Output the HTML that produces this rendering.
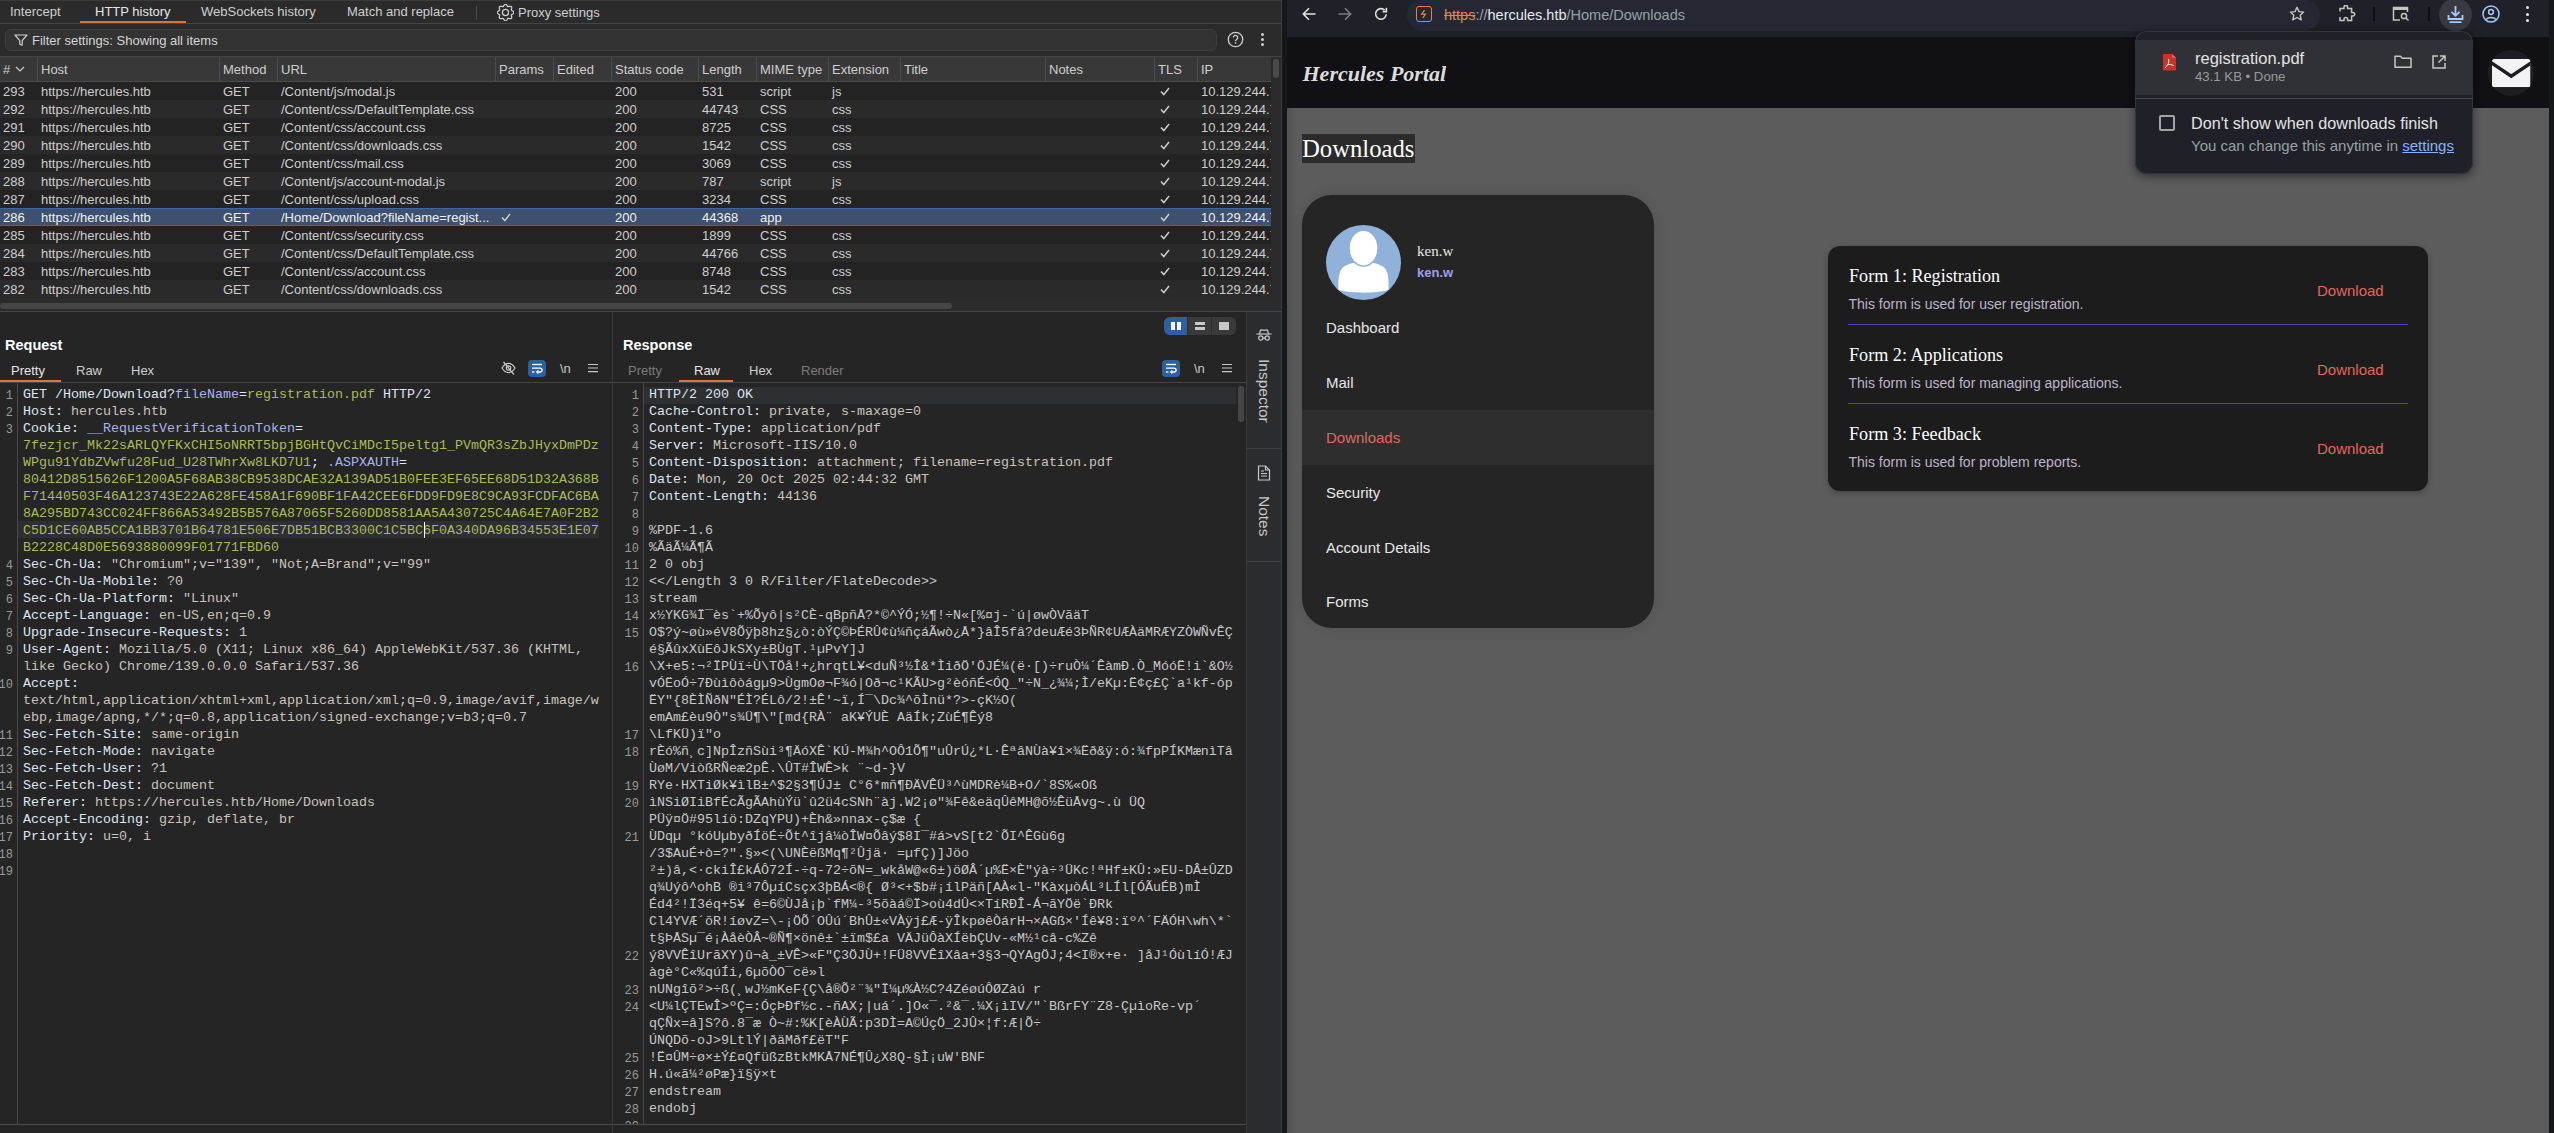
<!DOCTYPE html>
<html><head><meta charset="utf-8"><title>Burp Suite - Hercules Portal</title>
<style>
*{box-sizing:border-box}
html,body{margin:0;padding:0}
body{width:2554px;height:1133px;overflow:hidden;position:relative;background:#252525;font-family:"Liberation Sans",sans-serif;font-size:13px;color:#d6d6d6}
.a{position:absolute}
.t{position:absolute;white-space:pre}
.m{font-family:"Liberation Mono",monospace;font-size:13.333px;white-space:pre;position:absolute;line-height:17px}
</style></head><body>
<div class="a" style="left:0px;top:0px;width:1282px;height:1133px;background:#252525;"></div><div class="a" style="left:0px;top:0px;width:1282px;height:23px;background:#2b2b2b;"></div><div class="a" style="left:0px;top:0px;width:1282px;height:1px;background:#3a3a3a;"></div><div class="a" style="left:0px;top:23px;width:1282px;height:1px;background:#454545;"></div><div class="t" style="left:10.00px;top:1.50px;line-height:20px;font-size:13px;color:#cfcfcf;font-family:'Liberation Sans',sans-serif;font-weight:normal;font-style:normal;">Intercept</div><div class="t" style="left:95.00px;top:1.50px;line-height:20px;font-size:13px;color:#e6e6e6;font-family:'Liberation Sans',sans-serif;font-weight:normal;font-style:normal;">HTTP history</div><div class="t" style="left:201.00px;top:1.50px;line-height:20px;font-size:13px;color:#cfcfcf;font-family:'Liberation Sans',sans-serif;font-weight:normal;font-style:normal;">WebSockets history</div><div class="t" style="left:347.00px;top:1.50px;line-height:20px;font-size:13px;color:#cfcfcf;font-family:'Liberation Sans',sans-serif;font-weight:normal;font-style:normal;">Match and replace</div><div class="t" style="left:518.00px;top:2.50px;line-height:20px;font-size:13px;color:#cfcfcf;font-family:'Liberation Sans',sans-serif;font-weight:normal;font-style:normal;">Proxy settings</div><div class="a" style="left:80px;top:21px;width:106px;height:2px;background:#e2713a;"></div><div class="a" style="left:476px;top:6px;width:1px;height:14px;background:#4a4a4a;"></div><svg class="a" style="left:497px;top:3.9px;" width="17" height="17" viewBox="0 0 17 17"><g fill="none" stroke="#cfcfcf" stroke-width="1.25"><circle cx="8.5" cy="8.5" r="3.1"/><path d="M8.50 0.20 L8.82 0.25 L9.14 0.41 L9.43 0.65 L9.70 0.95 L9.93 1.29 L10.15 1.64 L10.34 1.96 L10.53 2.24 L10.73 2.45 L10.95 2.59 L11.20 2.65 L11.49 2.64 L11.82 2.57 L12.19 2.48 L12.58 2.39 L12.99 2.32 L13.40 2.29 L13.77 2.33 L14.10 2.44 L14.37 2.63 L14.56 2.90 L14.67 3.23 L14.71 3.60 L14.68 4.01 L14.61 4.42 L14.52 4.81 L14.43 5.18 L14.36 5.51 L14.35 5.80 L14.41 6.05 L14.55 6.27 L14.76 6.47 L15.04 6.66 L15.36 6.85 L15.71 7.07 L16.05 7.30 L16.35 7.57 L16.59 7.86 L16.75 8.18 L16.80 8.50 L16.75 8.82 L16.59 9.14 L16.35 9.43 L16.05 9.70 L15.71 9.93 L15.36 10.15 L15.04 10.34 L14.76 10.53 L14.55 10.73 L14.41 10.95 L14.35 11.20 L14.36 11.49 L14.43 11.82 L14.52 12.19 L14.61 12.58 L14.68 12.99 L14.71 13.40 L14.67 13.77 L14.56 14.10 L14.37 14.37 L14.10 14.56 L13.77 14.67 L13.40 14.71 L12.99 14.68 L12.58 14.61 L12.19 14.52 L11.82 14.43 L11.49 14.36 L11.20 14.35 L10.95 14.41 L10.73 14.55 L10.53 14.76 L10.34 15.04 L10.15 15.36 L9.93 15.71 L9.70 16.05 L9.43 16.35 L9.14 16.59 L8.82 16.75 L8.50 16.80 L8.18 16.75 L7.86 16.59 L7.57 16.35 L7.30 16.05 L7.07 15.71 L6.85 15.36 L6.66 15.04 L6.47 14.76 L6.27 14.55 L6.05 14.41 L5.80 14.35 L5.51 14.36 L5.18 14.43 L4.81 14.52 L4.42 14.61 L4.01 14.68 L3.60 14.71 L3.23 14.67 L2.90 14.56 L2.63 14.37 L2.44 14.10 L2.33 13.77 L2.29 13.40 L2.32 12.99 L2.39 12.58 L2.48 12.19 L2.57 11.82 L2.64 11.49 L2.65 11.20 L2.59 10.95 L2.45 10.73 L2.24 10.53 L1.96 10.34 L1.64 10.15 L1.29 9.93 L0.95 9.70 L0.65 9.43 L0.41 9.14 L0.25 8.82 L0.20 8.50 L0.25 8.18 L0.41 7.86 L0.65 7.57 L0.95 7.30 L1.29 7.07 L1.64 6.85 L1.96 6.66 L2.24 6.47 L2.45 6.27 L2.59 6.05 L2.65 5.80 L2.64 5.51 L2.57 5.18 L2.48 4.81 L2.39 4.42 L2.32 4.01 L2.29 3.60 L2.33 3.23 L2.44 2.90 L2.63 2.63 L2.90 2.44 L3.23 2.33 L3.60 2.29 L4.01 2.32 L4.42 2.39 L4.81 2.48 L5.18 2.57 L5.51 2.64 L5.80 2.65 L6.05 2.59 L6.27 2.45 L6.47 2.24 L6.66 1.96 L6.85 1.64 L7.07 1.29 L7.30 0.95 L7.57 0.65 L7.86 0.41 L8.18 0.25 L8.50 0.20Z"/></g></svg><div class="a" style="left:0px;top:24px;width:1282px;height:32px;background:#2b2b2b;"></div><div class="a" style="left:5px;top:29px;width:1212px;height:22px;background:#333333;border:1px solid #3e3e3e;border-radius:6px"></div><svg class="a" style="left:14px;top:34px;" width="14" height="12" viewBox="0 0 14 12"><path d="M1 1h12L8.2 6.6v4.6L5.8 10.2V6.6z" fill="none" stroke="#cfcfcf" stroke-width="1.2" stroke-linejoin="round"/></svg><div class="t" style="left:32.00px;top:30.50px;line-height:20px;font-size:13px;color:#d6d6d6;font-family:'Liberation Sans',sans-serif;font-weight:normal;font-style:normal;">Filter settings: Showing all items</div><svg class="a" style="left:1227px;top:31px;" width="17" height="17" viewBox="0 0 17 17"><circle cx="8.5" cy="8.5" r="7.2" fill="none" stroke="#cfcfcf" stroke-width="1.3"/><path d="M6.3 6.6a2.2 2.2 0 1 1 3.3 1.9c-.8.5-1.1.9-1.1 1.7" fill="none" stroke="#cfcfcf" stroke-width="1.3"/><rect x="7.9" y="11.2" width="1.3" height="1.6" fill="#cfcfcf"/></svg><div class="a" style="left:1261.0px;top:33.0px;width:3px;height:3px;border-radius:50%;background:#cfcfcf"></div><div class="a" style="left:1261.0px;top:38.1px;width:3px;height:3px;border-radius:50%;background:#cfcfcf"></div><div class="a" style="left:1261.0px;top:43.1px;width:3px;height:3px;border-radius:50%;background:#cfcfcf"></div><div class="a" style="left:0px;top:56px;width:1282px;height:1px;background:#454545;"></div><div class="a" style="left:1281px;top:0px;width:1px;height:1133px;background:#3c3c3c;"></div><div class="a" style="left:0px;top:57px;width:1271px;height:24px;background:#383838;"></div><div class="a" style="left:0px;top:81px;width:1271px;height:1px;background:#4a4a4a;"></div><div class="a" style="left:37px;top:57px;width:1px;height:24px;background:#4d4d4d;"></div><div class="a" style="left:219px;top:57px;width:1px;height:24px;background:#4d4d4d;"></div><div class="a" style="left:277px;top:57px;width:1px;height:24px;background:#4d4d4d;"></div><div class="a" style="left:495px;top:57px;width:1px;height:24px;background:#4d4d4d;"></div><div class="a" style="left:553px;top:57px;width:1px;height:24px;background:#4d4d4d;"></div><div class="a" style="left:611px;top:57px;width:1px;height:24px;background:#4d4d4d;"></div><div class="a" style="left:698px;top:57px;width:1px;height:24px;background:#4d4d4d;"></div><div class="a" style="left:756px;top:57px;width:1px;height:24px;background:#4d4d4d;"></div><div class="a" style="left:828px;top:57px;width:1px;height:24px;background:#4d4d4d;"></div><div class="a" style="left:900px;top:57px;width:1px;height:24px;background:#4d4d4d;"></div><div class="a" style="left:1045px;top:57px;width:1px;height:24px;background:#4d4d4d;"></div><div class="a" style="left:1154px;top:57px;width:1px;height:24px;background:#4d4d4d;"></div><div class="a" style="left:1197px;top:57px;width:1px;height:24px;background:#4d4d4d;"></div><div class="t" style="left:3.00px;top:59.50px;line-height:20px;font-size:13px;color:#cecece;font-family:'Liberation Sans',sans-serif;font-weight:normal;font-style:normal;">#</div><div class="t" style="left:41.00px;top:59.50px;line-height:20px;font-size:13px;color:#cecece;font-family:'Liberation Sans',sans-serif;font-weight:normal;font-style:normal;">Host</div><div class="t" style="left:223.00px;top:59.50px;line-height:20px;font-size:13px;color:#cecece;font-family:'Liberation Sans',sans-serif;font-weight:normal;font-style:normal;">Method</div><div class="t" style="left:281.00px;top:59.50px;line-height:20px;font-size:13px;color:#cecece;font-family:'Liberation Sans',sans-serif;font-weight:normal;font-style:normal;">URL</div><div class="t" style="left:499.00px;top:59.50px;line-height:20px;font-size:13px;color:#cecece;font-family:'Liberation Sans',sans-serif;font-weight:normal;font-style:normal;">Params</div><div class="t" style="left:557.00px;top:59.50px;line-height:20px;font-size:13px;color:#cecece;font-family:'Liberation Sans',sans-serif;font-weight:normal;font-style:normal;">Edited</div><div class="t" style="left:615.00px;top:59.50px;line-height:20px;font-size:13px;color:#cecece;font-family:'Liberation Sans',sans-serif;font-weight:normal;font-style:normal;">Status code</div><div class="t" style="left:702.00px;top:59.50px;line-height:20px;font-size:13px;color:#cecece;font-family:'Liberation Sans',sans-serif;font-weight:normal;font-style:normal;">Length</div><div class="t" style="left:760.00px;top:59.50px;line-height:20px;font-size:13px;color:#cecece;font-family:'Liberation Sans',sans-serif;font-weight:normal;font-style:normal;">MIME type</div><div class="t" style="left:832.00px;top:59.50px;line-height:20px;font-size:13px;color:#cecece;font-family:'Liberation Sans',sans-serif;font-weight:normal;font-style:normal;">Extension</div><div class="t" style="left:904.00px;top:59.50px;line-height:20px;font-size:13px;color:#cecece;font-family:'Liberation Sans',sans-serif;font-weight:normal;font-style:normal;">Title</div><div class="t" style="left:1049.00px;top:59.50px;line-height:20px;font-size:13px;color:#cecece;font-family:'Liberation Sans',sans-serif;font-weight:normal;font-style:normal;">Notes</div><div class="t" style="left:1158.00px;top:59.50px;line-height:20px;font-size:13px;color:#cecece;font-family:'Liberation Sans',sans-serif;font-weight:normal;font-style:normal;">TLS</div><div class="t" style="left:1201.00px;top:59.50px;line-height:20px;font-size:13px;color:#cecece;font-family:'Liberation Sans',sans-serif;font-weight:normal;font-style:normal;">IP</div><svg class="a" style="left:15px;top:66px;" width="10" height="6" viewBox="0 0 10 6"><path d="M1 1l4 4 4-4" fill="none" stroke="#cfcfcf" stroke-width="1.1"/></svg><div class="a" style="left:0;top:82px;width:1271px;height:216px;overflow:hidden"><div class="a" style="left:0px;top:0px;width:1271px;height:18px;background:#232323;"></div><div class="t" style="left:3.00px;top:-0.50px;line-height:20px;font-size:13px;color:#cecece;font-family:'Liberation Sans',sans-serif;font-weight:normal;font-style:normal;">293</div><div class="t" style="left:41.00px;top:-0.50px;line-height:20px;font-size:13px;color:#cecece;font-family:'Liberation Sans',sans-serif;font-weight:normal;font-style:normal;">https://hercules.htb</div><div class="t" style="left:223.00px;top:-0.50px;line-height:20px;font-size:13px;color:#cecece;font-family:'Liberation Sans',sans-serif;font-weight:normal;font-style:normal;">GET</div><div class="t" style="left:281.00px;top:-0.50px;line-height:20px;font-size:13px;color:#cecece;font-family:'Liberation Sans',sans-serif;font-weight:normal;font-style:normal;">/Content/js/modal.js</div><div class="t" style="left:615.00px;top:-0.50px;line-height:20px;font-size:13px;color:#cecece;font-family:'Liberation Sans',sans-serif;font-weight:normal;font-style:normal;">200</div><div class="t" style="left:702.00px;top:-0.50px;line-height:20px;font-size:13px;color:#cecece;font-family:'Liberation Sans',sans-serif;font-weight:normal;font-style:normal;">531</div><div class="t" style="left:760.00px;top:-0.50px;line-height:20px;font-size:13px;color:#cecece;font-family:'Liberation Sans',sans-serif;font-weight:normal;font-style:normal;">script</div><div class="t" style="left:832.00px;top:-0.50px;line-height:20px;font-size:13px;color:#cecece;font-family:'Liberation Sans',sans-serif;font-weight:normal;font-style:normal;">js</div><svg class="a" style="left:1159.5px;top:5px;" width="10" height="9" viewBox="0 0 10 9"><path d="M1 4.6l2.8 3 5.2-6.6" fill="none" stroke="#d0d0d0" stroke-width="1.5"/></svg><div class="a" style="left:1201px;top:0px;width:70px;height:18px;overflow:hidden"><div class="t" style="left:0.00px;top:-0.50px;line-height:20px;font-size:13px;color:#cecece;font-family:'Liberation Sans',sans-serif;font-weight:normal;font-style:normal;">10.129.244.73</div></div><div class="a" style="left:0px;top:18px;width:1271px;height:18px;background:#2a2a2a;"></div><div class="t" style="left:3.00px;top:17.50px;line-height:20px;font-size:13px;color:#cecece;font-family:'Liberation Sans',sans-serif;font-weight:normal;font-style:normal;">292</div><div class="t" style="left:41.00px;top:17.50px;line-height:20px;font-size:13px;color:#cecece;font-family:'Liberation Sans',sans-serif;font-weight:normal;font-style:normal;">https://hercules.htb</div><div class="t" style="left:223.00px;top:17.50px;line-height:20px;font-size:13px;color:#cecece;font-family:'Liberation Sans',sans-serif;font-weight:normal;font-style:normal;">GET</div><div class="t" style="left:281.00px;top:17.50px;line-height:20px;font-size:13px;color:#cecece;font-family:'Liberation Sans',sans-serif;font-weight:normal;font-style:normal;">/Content/css/DefaultTemplate.css</div><div class="t" style="left:615.00px;top:17.50px;line-height:20px;font-size:13px;color:#cecece;font-family:'Liberation Sans',sans-serif;font-weight:normal;font-style:normal;">200</div><div class="t" style="left:702.00px;top:17.50px;line-height:20px;font-size:13px;color:#cecece;font-family:'Liberation Sans',sans-serif;font-weight:normal;font-style:normal;">44743</div><div class="t" style="left:760.00px;top:17.50px;line-height:20px;font-size:13px;color:#cecece;font-family:'Liberation Sans',sans-serif;font-weight:normal;font-style:normal;">CSS</div><div class="t" style="left:832.00px;top:17.50px;line-height:20px;font-size:13px;color:#cecece;font-family:'Liberation Sans',sans-serif;font-weight:normal;font-style:normal;">css</div><svg class="a" style="left:1159.5px;top:23px;" width="10" height="9" viewBox="0 0 10 9"><path d="M1 4.6l2.8 3 5.2-6.6" fill="none" stroke="#d0d0d0" stroke-width="1.5"/></svg><div class="a" style="left:1201px;top:18px;width:70px;height:18px;overflow:hidden"><div class="t" style="left:0.00px;top:-0.50px;line-height:20px;font-size:13px;color:#cecece;font-family:'Liberation Sans',sans-serif;font-weight:normal;font-style:normal;">10.129.244.73</div></div><div class="a" style="left:0px;top:36px;width:1271px;height:18px;background:#232323;"></div><div class="t" style="left:3.00px;top:35.50px;line-height:20px;font-size:13px;color:#cecece;font-family:'Liberation Sans',sans-serif;font-weight:normal;font-style:normal;">291</div><div class="t" style="left:41.00px;top:35.50px;line-height:20px;font-size:13px;color:#cecece;font-family:'Liberation Sans',sans-serif;font-weight:normal;font-style:normal;">https://hercules.htb</div><div class="t" style="left:223.00px;top:35.50px;line-height:20px;font-size:13px;color:#cecece;font-family:'Liberation Sans',sans-serif;font-weight:normal;font-style:normal;">GET</div><div class="t" style="left:281.00px;top:35.50px;line-height:20px;font-size:13px;color:#cecece;font-family:'Liberation Sans',sans-serif;font-weight:normal;font-style:normal;">/Content/css/account.css</div><div class="t" style="left:615.00px;top:35.50px;line-height:20px;font-size:13px;color:#cecece;font-family:'Liberation Sans',sans-serif;font-weight:normal;font-style:normal;">200</div><div class="t" style="left:702.00px;top:35.50px;line-height:20px;font-size:13px;color:#cecece;font-family:'Liberation Sans',sans-serif;font-weight:normal;font-style:normal;">8725</div><div class="t" style="left:760.00px;top:35.50px;line-height:20px;font-size:13px;color:#cecece;font-family:'Liberation Sans',sans-serif;font-weight:normal;font-style:normal;">CSS</div><div class="t" style="left:832.00px;top:35.50px;line-height:20px;font-size:13px;color:#cecece;font-family:'Liberation Sans',sans-serif;font-weight:normal;font-style:normal;">css</div><svg class="a" style="left:1159.5px;top:41px;" width="10" height="9" viewBox="0 0 10 9"><path d="M1 4.6l2.8 3 5.2-6.6" fill="none" stroke="#d0d0d0" stroke-width="1.5"/></svg><div class="a" style="left:1201px;top:36px;width:70px;height:18px;overflow:hidden"><div class="t" style="left:0.00px;top:-0.50px;line-height:20px;font-size:13px;color:#cecece;font-family:'Liberation Sans',sans-serif;font-weight:normal;font-style:normal;">10.129.244.73</div></div><div class="a" style="left:0px;top:54px;width:1271px;height:18px;background:#2a2a2a;"></div><div class="t" style="left:3.00px;top:53.50px;line-height:20px;font-size:13px;color:#cecece;font-family:'Liberation Sans',sans-serif;font-weight:normal;font-style:normal;">290</div><div class="t" style="left:41.00px;top:53.50px;line-height:20px;font-size:13px;color:#cecece;font-family:'Liberation Sans',sans-serif;font-weight:normal;font-style:normal;">https://hercules.htb</div><div class="t" style="left:223.00px;top:53.50px;line-height:20px;font-size:13px;color:#cecece;font-family:'Liberation Sans',sans-serif;font-weight:normal;font-style:normal;">GET</div><div class="t" style="left:281.00px;top:53.50px;line-height:20px;font-size:13px;color:#cecece;font-family:'Liberation Sans',sans-serif;font-weight:normal;font-style:normal;">/Content/css/downloads.css</div><div class="t" style="left:615.00px;top:53.50px;line-height:20px;font-size:13px;color:#cecece;font-family:'Liberation Sans',sans-serif;font-weight:normal;font-style:normal;">200</div><div class="t" style="left:702.00px;top:53.50px;line-height:20px;font-size:13px;color:#cecece;font-family:'Liberation Sans',sans-serif;font-weight:normal;font-style:normal;">1542</div><div class="t" style="left:760.00px;top:53.50px;line-height:20px;font-size:13px;color:#cecece;font-family:'Liberation Sans',sans-serif;font-weight:normal;font-style:normal;">CSS</div><div class="t" style="left:832.00px;top:53.50px;line-height:20px;font-size:13px;color:#cecece;font-family:'Liberation Sans',sans-serif;font-weight:normal;font-style:normal;">css</div><svg class="a" style="left:1159.5px;top:59px;" width="10" height="9" viewBox="0 0 10 9"><path d="M1 4.6l2.8 3 5.2-6.6" fill="none" stroke="#d0d0d0" stroke-width="1.5"/></svg><div class="a" style="left:1201px;top:54px;width:70px;height:18px;overflow:hidden"><div class="t" style="left:0.00px;top:-0.50px;line-height:20px;font-size:13px;color:#cecece;font-family:'Liberation Sans',sans-serif;font-weight:normal;font-style:normal;">10.129.244.73</div></div><div class="a" style="left:0px;top:72px;width:1271px;height:18px;background:#232323;"></div><div class="t" style="left:3.00px;top:71.50px;line-height:20px;font-size:13px;color:#cecece;font-family:'Liberation Sans',sans-serif;font-weight:normal;font-style:normal;">289</div><div class="t" style="left:41.00px;top:71.50px;line-height:20px;font-size:13px;color:#cecece;font-family:'Liberation Sans',sans-serif;font-weight:normal;font-style:normal;">https://hercules.htb</div><div class="t" style="left:223.00px;top:71.50px;line-height:20px;font-size:13px;color:#cecece;font-family:'Liberation Sans',sans-serif;font-weight:normal;font-style:normal;">GET</div><div class="t" style="left:281.00px;top:71.50px;line-height:20px;font-size:13px;color:#cecece;font-family:'Liberation Sans',sans-serif;font-weight:normal;font-style:normal;">/Content/css/mail.css</div><div class="t" style="left:615.00px;top:71.50px;line-height:20px;font-size:13px;color:#cecece;font-family:'Liberation Sans',sans-serif;font-weight:normal;font-style:normal;">200</div><div class="t" style="left:702.00px;top:71.50px;line-height:20px;font-size:13px;color:#cecece;font-family:'Liberation Sans',sans-serif;font-weight:normal;font-style:normal;">3069</div><div class="t" style="left:760.00px;top:71.50px;line-height:20px;font-size:13px;color:#cecece;font-family:'Liberation Sans',sans-serif;font-weight:normal;font-style:normal;">CSS</div><div class="t" style="left:832.00px;top:71.50px;line-height:20px;font-size:13px;color:#cecece;font-family:'Liberation Sans',sans-serif;font-weight:normal;font-style:normal;">css</div><svg class="a" style="left:1159.5px;top:77px;" width="10" height="9" viewBox="0 0 10 9"><path d="M1 4.6l2.8 3 5.2-6.6" fill="none" stroke="#d0d0d0" stroke-width="1.5"/></svg><div class="a" style="left:1201px;top:72px;width:70px;height:18px;overflow:hidden"><div class="t" style="left:0.00px;top:-0.50px;line-height:20px;font-size:13px;color:#cecece;font-family:'Liberation Sans',sans-serif;font-weight:normal;font-style:normal;">10.129.244.73</div></div><div class="a" style="left:0px;top:90px;width:1271px;height:18px;background:#2a2a2a;"></div><div class="t" style="left:3.00px;top:89.50px;line-height:20px;font-size:13px;color:#cecece;font-family:'Liberation Sans',sans-serif;font-weight:normal;font-style:normal;">288</div><div class="t" style="left:41.00px;top:89.50px;line-height:20px;font-size:13px;color:#cecece;font-family:'Liberation Sans',sans-serif;font-weight:normal;font-style:normal;">https://hercules.htb</div><div class="t" style="left:223.00px;top:89.50px;line-height:20px;font-size:13px;color:#cecece;font-family:'Liberation Sans',sans-serif;font-weight:normal;font-style:normal;">GET</div><div class="t" style="left:281.00px;top:89.50px;line-height:20px;font-size:13px;color:#cecece;font-family:'Liberation Sans',sans-serif;font-weight:normal;font-style:normal;">/Content/js/account-modal.js</div><div class="t" style="left:615.00px;top:89.50px;line-height:20px;font-size:13px;color:#cecece;font-family:'Liberation Sans',sans-serif;font-weight:normal;font-style:normal;">200</div><div class="t" style="left:702.00px;top:89.50px;line-height:20px;font-size:13px;color:#cecece;font-family:'Liberation Sans',sans-serif;font-weight:normal;font-style:normal;">787</div><div class="t" style="left:760.00px;top:89.50px;line-height:20px;font-size:13px;color:#cecece;font-family:'Liberation Sans',sans-serif;font-weight:normal;font-style:normal;">script</div><div class="t" style="left:832.00px;top:89.50px;line-height:20px;font-size:13px;color:#cecece;font-family:'Liberation Sans',sans-serif;font-weight:normal;font-style:normal;">js</div><svg class="a" style="left:1159.5px;top:95px;" width="10" height="9" viewBox="0 0 10 9"><path d="M1 4.6l2.8 3 5.2-6.6" fill="none" stroke="#d0d0d0" stroke-width="1.5"/></svg><div class="a" style="left:1201px;top:90px;width:70px;height:18px;overflow:hidden"><div class="t" style="left:0.00px;top:-0.50px;line-height:20px;font-size:13px;color:#cecece;font-family:'Liberation Sans',sans-serif;font-weight:normal;font-style:normal;">10.129.244.73</div></div><div class="a" style="left:0px;top:108px;width:1271px;height:18px;background:#232323;"></div><div class="t" style="left:3.00px;top:107.50px;line-height:20px;font-size:13px;color:#cecece;font-family:'Liberation Sans',sans-serif;font-weight:normal;font-style:normal;">287</div><div class="t" style="left:41.00px;top:107.50px;line-height:20px;font-size:13px;color:#cecece;font-family:'Liberation Sans',sans-serif;font-weight:normal;font-style:normal;">https://hercules.htb</div><div class="t" style="left:223.00px;top:107.50px;line-height:20px;font-size:13px;color:#cecece;font-family:'Liberation Sans',sans-serif;font-weight:normal;font-style:normal;">GET</div><div class="t" style="left:281.00px;top:107.50px;line-height:20px;font-size:13px;color:#cecece;font-family:'Liberation Sans',sans-serif;font-weight:normal;font-style:normal;">/Content/css/upload.css</div><div class="t" style="left:615.00px;top:107.50px;line-height:20px;font-size:13px;color:#cecece;font-family:'Liberation Sans',sans-serif;font-weight:normal;font-style:normal;">200</div><div class="t" style="left:702.00px;top:107.50px;line-height:20px;font-size:13px;color:#cecece;font-family:'Liberation Sans',sans-serif;font-weight:normal;font-style:normal;">3234</div><div class="t" style="left:760.00px;top:107.50px;line-height:20px;font-size:13px;color:#cecece;font-family:'Liberation Sans',sans-serif;font-weight:normal;font-style:normal;">CSS</div><div class="t" style="left:832.00px;top:107.50px;line-height:20px;font-size:13px;color:#cecece;font-family:'Liberation Sans',sans-serif;font-weight:normal;font-style:normal;">css</div><svg class="a" style="left:1159.5px;top:113px;" width="10" height="9" viewBox="0 0 10 9"><path d="M1 4.6l2.8 3 5.2-6.6" fill="none" stroke="#d0d0d0" stroke-width="1.5"/></svg><div class="a" style="left:1201px;top:108px;width:70px;height:18px;overflow:hidden"><div class="t" style="left:0.00px;top:-0.50px;line-height:20px;font-size:13px;color:#cecece;font-family:'Liberation Sans',sans-serif;font-weight:normal;font-style:normal;">10.129.244.73</div></div><div class="a" style="left:0px;top:126px;width:1271px;height:18px;background:#3d506f;"></div><div class="a" style="left:0px;top:126px;width:1271px;height:1px;background:#3a67a6;"></div><div class="a" style="left:0px;top:143px;width:1271px;height:1px;background:#3a67a6;"></div><div class="t" style="left:3.00px;top:125.50px;line-height:20px;font-size:13px;color:#f0f0f0;font-family:'Liberation Sans',sans-serif;font-weight:normal;font-style:normal;">286</div><div class="t" style="left:41.00px;top:125.50px;line-height:20px;font-size:13px;color:#f0f0f0;font-family:'Liberation Sans',sans-serif;font-weight:normal;font-style:normal;">https://hercules.htb</div><div class="t" style="left:223.00px;top:125.50px;line-height:20px;font-size:13px;color:#f0f0f0;font-family:'Liberation Sans',sans-serif;font-weight:normal;font-style:normal;">GET</div><div class="t" style="left:281.00px;top:125.50px;line-height:20px;font-size:13px;color:#f0f0f0;font-family:'Liberation Sans',sans-serif;font-weight:normal;font-style:normal;">/Home/Download?fileName=regist...</div><svg class="a" style="left:501px;top:131px;" width="10" height="9" viewBox="0 0 10 9"><path d="M1 4.6l2.8 3 5.2-6.6" fill="none" stroke="#cfcfcf" stroke-width="1.5"/></svg><div class="t" style="left:615.00px;top:125.50px;line-height:20px;font-size:13px;color:#f0f0f0;font-family:'Liberation Sans',sans-serif;font-weight:normal;font-style:normal;">200</div><div class="t" style="left:702.00px;top:125.50px;line-height:20px;font-size:13px;color:#f0f0f0;font-family:'Liberation Sans',sans-serif;font-weight:normal;font-style:normal;">44368</div><div class="t" style="left:760.00px;top:125.50px;line-height:20px;font-size:13px;color:#f0f0f0;font-family:'Liberation Sans',sans-serif;font-weight:normal;font-style:normal;">app</div><div class="t" style="left:832.00px;top:125.50px;line-height:20px;font-size:13px;color:#f0f0f0;font-family:'Liberation Sans',sans-serif;font-weight:normal;font-style:normal;"></div><svg class="a" style="left:1159.5px;top:131px;" width="10" height="9" viewBox="0 0 10 9"><path d="M1 4.6l2.8 3 5.2-6.6" fill="none" stroke="#d0d0d0" stroke-width="1.5"/></svg><div class="a" style="left:1201px;top:126px;width:70px;height:18px;overflow:hidden"><div class="t" style="left:0.00px;top:-0.50px;line-height:20px;font-size:13px;color:#f0f0f0;font-family:'Liberation Sans',sans-serif;font-weight:normal;font-style:normal;">10.129.244.73</div></div><div class="a" style="left:0px;top:144px;width:1271px;height:18px;background:#232323;"></div><div class="t" style="left:3.00px;top:143.50px;line-height:20px;font-size:13px;color:#cecece;font-family:'Liberation Sans',sans-serif;font-weight:normal;font-style:normal;">285</div><div class="t" style="left:41.00px;top:143.50px;line-height:20px;font-size:13px;color:#cecece;font-family:'Liberation Sans',sans-serif;font-weight:normal;font-style:normal;">https://hercules.htb</div><div class="t" style="left:223.00px;top:143.50px;line-height:20px;font-size:13px;color:#cecece;font-family:'Liberation Sans',sans-serif;font-weight:normal;font-style:normal;">GET</div><div class="t" style="left:281.00px;top:143.50px;line-height:20px;font-size:13px;color:#cecece;font-family:'Liberation Sans',sans-serif;font-weight:normal;font-style:normal;">/Content/css/security.css</div><div class="t" style="left:615.00px;top:143.50px;line-height:20px;font-size:13px;color:#cecece;font-family:'Liberation Sans',sans-serif;font-weight:normal;font-style:normal;">200</div><div class="t" style="left:702.00px;top:143.50px;line-height:20px;font-size:13px;color:#cecece;font-family:'Liberation Sans',sans-serif;font-weight:normal;font-style:normal;">1899</div><div class="t" style="left:760.00px;top:143.50px;line-height:20px;font-size:13px;color:#cecece;font-family:'Liberation Sans',sans-serif;font-weight:normal;font-style:normal;">CSS</div><div class="t" style="left:832.00px;top:143.50px;line-height:20px;font-size:13px;color:#cecece;font-family:'Liberation Sans',sans-serif;font-weight:normal;font-style:normal;">css</div><svg class="a" style="left:1159.5px;top:149px;" width="10" height="9" viewBox="0 0 10 9"><path d="M1 4.6l2.8 3 5.2-6.6" fill="none" stroke="#d0d0d0" stroke-width="1.5"/></svg><div class="a" style="left:1201px;top:144px;width:70px;height:18px;overflow:hidden"><div class="t" style="left:0.00px;top:-0.50px;line-height:20px;font-size:13px;color:#cecece;font-family:'Liberation Sans',sans-serif;font-weight:normal;font-style:normal;">10.129.244.73</div></div><div class="a" style="left:0px;top:162px;width:1271px;height:18px;background:#2a2a2a;"></div><div class="t" style="left:3.00px;top:161.50px;line-height:20px;font-size:13px;color:#cecece;font-family:'Liberation Sans',sans-serif;font-weight:normal;font-style:normal;">284</div><div class="t" style="left:41.00px;top:161.50px;line-height:20px;font-size:13px;color:#cecece;font-family:'Liberation Sans',sans-serif;font-weight:normal;font-style:normal;">https://hercules.htb</div><div class="t" style="left:223.00px;top:161.50px;line-height:20px;font-size:13px;color:#cecece;font-family:'Liberation Sans',sans-serif;font-weight:normal;font-style:normal;">GET</div><div class="t" style="left:281.00px;top:161.50px;line-height:20px;font-size:13px;color:#cecece;font-family:'Liberation Sans',sans-serif;font-weight:normal;font-style:normal;">/Content/css/DefaultTemplate.css</div><div class="t" style="left:615.00px;top:161.50px;line-height:20px;font-size:13px;color:#cecece;font-family:'Liberation Sans',sans-serif;font-weight:normal;font-style:normal;">200</div><div class="t" style="left:702.00px;top:161.50px;line-height:20px;font-size:13px;color:#cecece;font-family:'Liberation Sans',sans-serif;font-weight:normal;font-style:normal;">44766</div><div class="t" style="left:760.00px;top:161.50px;line-height:20px;font-size:13px;color:#cecece;font-family:'Liberation Sans',sans-serif;font-weight:normal;font-style:normal;">CSS</div><div class="t" style="left:832.00px;top:161.50px;line-height:20px;font-size:13px;color:#cecece;font-family:'Liberation Sans',sans-serif;font-weight:normal;font-style:normal;">css</div><svg class="a" style="left:1159.5px;top:167px;" width="10" height="9" viewBox="0 0 10 9"><path d="M1 4.6l2.8 3 5.2-6.6" fill="none" stroke="#d0d0d0" stroke-width="1.5"/></svg><div class="a" style="left:1201px;top:162px;width:70px;height:18px;overflow:hidden"><div class="t" style="left:0.00px;top:-0.50px;line-height:20px;font-size:13px;color:#cecece;font-family:'Liberation Sans',sans-serif;font-weight:normal;font-style:normal;">10.129.244.73</div></div><div class="a" style="left:0px;top:180px;width:1271px;height:18px;background:#232323;"></div><div class="t" style="left:3.00px;top:179.50px;line-height:20px;font-size:13px;color:#cecece;font-family:'Liberation Sans',sans-serif;font-weight:normal;font-style:normal;">283</div><div class="t" style="left:41.00px;top:179.50px;line-height:20px;font-size:13px;color:#cecece;font-family:'Liberation Sans',sans-serif;font-weight:normal;font-style:normal;">https://hercules.htb</div><div class="t" style="left:223.00px;top:179.50px;line-height:20px;font-size:13px;color:#cecece;font-family:'Liberation Sans',sans-serif;font-weight:normal;font-style:normal;">GET</div><div class="t" style="left:281.00px;top:179.50px;line-height:20px;font-size:13px;color:#cecece;font-family:'Liberation Sans',sans-serif;font-weight:normal;font-style:normal;">/Content/css/account.css</div><div class="t" style="left:615.00px;top:179.50px;line-height:20px;font-size:13px;color:#cecece;font-family:'Liberation Sans',sans-serif;font-weight:normal;font-style:normal;">200</div><div class="t" style="left:702.00px;top:179.50px;line-height:20px;font-size:13px;color:#cecece;font-family:'Liberation Sans',sans-serif;font-weight:normal;font-style:normal;">8748</div><div class="t" style="left:760.00px;top:179.50px;line-height:20px;font-size:13px;color:#cecece;font-family:'Liberation Sans',sans-serif;font-weight:normal;font-style:normal;">CSS</div><div class="t" style="left:832.00px;top:179.50px;line-height:20px;font-size:13px;color:#cecece;font-family:'Liberation Sans',sans-serif;font-weight:normal;font-style:normal;">css</div><svg class="a" style="left:1159.5px;top:185px;" width="10" height="9" viewBox="0 0 10 9"><path d="M1 4.6l2.8 3 5.2-6.6" fill="none" stroke="#d0d0d0" stroke-width="1.5"/></svg><div class="a" style="left:1201px;top:180px;width:70px;height:18px;overflow:hidden"><div class="t" style="left:0.00px;top:-0.50px;line-height:20px;font-size:13px;color:#cecece;font-family:'Liberation Sans',sans-serif;font-weight:normal;font-style:normal;">10.129.244.73</div></div><div class="a" style="left:0px;top:198px;width:1271px;height:18px;background:#2a2a2a;"></div><div class="t" style="left:3.00px;top:197.50px;line-height:20px;font-size:13px;color:#cecece;font-family:'Liberation Sans',sans-serif;font-weight:normal;font-style:normal;">282</div><div class="t" style="left:41.00px;top:197.50px;line-height:20px;font-size:13px;color:#cecece;font-family:'Liberation Sans',sans-serif;font-weight:normal;font-style:normal;">https://hercules.htb</div><div class="t" style="left:223.00px;top:197.50px;line-height:20px;font-size:13px;color:#cecece;font-family:'Liberation Sans',sans-serif;font-weight:normal;font-style:normal;">GET</div><div class="t" style="left:281.00px;top:197.50px;line-height:20px;font-size:13px;color:#cecece;font-family:'Liberation Sans',sans-serif;font-weight:normal;font-style:normal;">/Content/css/downloads.css</div><div class="t" style="left:615.00px;top:197.50px;line-height:20px;font-size:13px;color:#cecece;font-family:'Liberation Sans',sans-serif;font-weight:normal;font-style:normal;">200</div><div class="t" style="left:702.00px;top:197.50px;line-height:20px;font-size:13px;color:#cecece;font-family:'Liberation Sans',sans-serif;font-weight:normal;font-style:normal;">1542</div><div class="t" style="left:760.00px;top:197.50px;line-height:20px;font-size:13px;color:#cecece;font-family:'Liberation Sans',sans-serif;font-weight:normal;font-style:normal;">CSS</div><div class="t" style="left:832.00px;top:197.50px;line-height:20px;font-size:13px;color:#cecece;font-family:'Liberation Sans',sans-serif;font-weight:normal;font-style:normal;">css</div><svg class="a" style="left:1159.5px;top:203px;" width="10" height="9" viewBox="0 0 10 9"><path d="M1 4.6l2.8 3 5.2-6.6" fill="none" stroke="#d0d0d0" stroke-width="1.5"/></svg><div class="a" style="left:1201px;top:198px;width:70px;height:18px;overflow:hidden"><div class="t" style="left:0.00px;top:-0.50px;line-height:20px;font-size:13px;color:#cecece;font-family:'Liberation Sans',sans-serif;font-weight:normal;font-style:normal;">10.129.244.73</div></div></div><div class="a" style="left:1271px;top:57px;width:10px;height:241px;background:#2b2b2b;"></div><div class="a" style="left:1273px;top:59px;width:6px;height:19px;border-radius:3px;background:#4a4a4a"></div><div class="a" style="left:0px;top:298px;width:1281px;height:13px;background:#2b2b2b;"></div><div class="a" style="left:0;top:303px;width:952px;height:6px;border-radius:3px;background:#464646"></div><div class="a" style="left:0px;top:311px;width:1281px;height:1px;background:#454545;"></div><div class="a" style="left:0px;top:312px;width:612px;height:821px;background:#252525;"></div><div class="t" style="left:5.00px;top:333.98px;line-height:22px;font-size:14.5px;color:#ffffff;font-family:'Liberation Sans',sans-serif;font-weight:bold;font-style:normal;">Request</div><div class="t" style="left:11.00px;top:360.50px;line-height:20px;font-size:13px;color:#e6e6e6;font-family:'Liberation Sans',sans-serif;font-weight:normal;font-style:normal;">Pretty</div><div class="t" style="left:76.00px;top:360.50px;line-height:20px;font-size:13px;color:#cfcfcf;font-family:'Liberation Sans',sans-serif;font-weight:normal;font-style:normal;">Raw</div><div class="t" style="left:131.00px;top:360.50px;line-height:20px;font-size:13px;color:#cfcfcf;font-family:'Liberation Sans',sans-serif;font-weight:normal;font-style:normal;">Hex</div><div class="a" style="left:0px;top:380px;width:61px;height:2px;background:#e2713a;"></div><div class="a" style="left:0px;top:382px;width:612px;height:1px;background:#454545;"></div><svg class="a" style="left:501px;top:361px;" width="15" height="14" viewBox="0 0 15 14"><g fill="none" stroke="#c8c8c8" stroke-width="1.2"><path d="M1 7c2-3.2 4-4.6 6.5-4.6S12 3.8 14 7c-2 3.2-4 4.6-6.5 4.6S3 10.2 1 7z"/><circle cx="7.5" cy="7" r="2.2"/><path d="M2.5 1l10.5 12.5"/></g></svg><div class="a" style="left:528px;top:360px;width:18px;height:17px;border-radius:4px;background:#2f5f9e"></div><svg class="a" style="left:531px;top:363px;" width="12" height="11" viewBox="0 0 12 11"><g fill="none" stroke="#ffffff" stroke-width="1.3"><path d="M1 1.5h10"/><path d="M1 5.2h8.2a1.9 1.9 0 0 1 0 3.8H6"/><path d="M1 9h2.5"/><path d="M7.4 7.5L5.8 9l1.6 1.5"/></g></svg><div class="t" style="left:560.00px;top:358.50px;line-height:20px;font-size:13px;color:#c8c8c8;font-family:'Liberation Sans',sans-serif;font-weight:normal;font-style:normal;">\n</div><svg class="a" style="left:588px;top:363px;" width="10" height="10" viewBox="0 0 10 10"><g stroke="#c8c8c8" stroke-width="1.1"><path d="M0 1.5h10M0 5h10M0 8.6h10"/></g></svg><div class="a" style="left:17px;top:383px;width:1px;height:741px;background:#4a4a4a;"></div><div class="a" style="left:18px;top:521px;width:581px;height:17px;background:#2e2f31;"></div><div class="a" style="left:-17px;top:387.60px;width:30px;text-align:right;font-family:'Liberation Mono',monospace;font-size:12px;line-height:17px;color:#9a9a9a;white-space:pre">1</div><div class="m" style="left:23px;top:385.95px"><span style="color:#dde6f2">GET /Home/Download?</span><span style="color:#a9b4ee">fileName</span><span style="color:#dde6f2">=</span><span style="color:#a9bb58">registration.pdf</span><span style="color:#dde6f2"> HTTP/2</span></div><div class="a" style="left:-17px;top:404.60px;width:30px;text-align:right;font-family:'Liberation Mono',monospace;font-size:12px;line-height:17px;color:#9a9a9a;white-space:pre">2</div><div class="m" style="left:23px;top:402.95px"><span style="color:#dde6f2">Host: </span><span style="color:#c9c4be">hercules.htb</span></div><div class="a" style="left:-17px;top:421.60px;width:30px;text-align:right;font-family:'Liberation Mono',monospace;font-size:12px;line-height:17px;color:#9a9a9a;white-space:pre">3</div><div class="m" style="left:23px;top:419.95px"><span style="color:#dde6f2">Cookie: </span><span style="color:#a9b4ee">__RequestVerificationToken</span><span style="color:#dde6f2">=</span></div><div class="m" style="left:23px;top:436.95px"><span style="color:#a9bb58">7fezjcr_Mk22sARLQYFKxCHI5oNRRT5bpjBGHtQvCiMDcI5peltg1_PVmQR3sZbJHyxDmPDz</span></div><div class="m" style="left:23px;top:453.95px"><span style="color:#a9bb58">WPgu91YdbZVwfu28Fud_U28TWhrXw8LKD7U1</span><span style="color:#dde6f2">; </span><span style="color:#a9b4ee">.ASPXAUTH</span><span style="color:#dde6f2">=</span></div><div class="m" style="left:23px;top:470.95px"><span style="color:#a9bb58">80412D8515626F1200A5F68AB38CB9538DCAE32A139AD51B0FEE3EF65EE68D51D32A368B</span></div><div class="m" style="left:23px;top:487.95px"><span style="color:#a9bb58">F71440503F46A123743E22A628FE458A1F690BF1FA42CEE6FDD9FD9E8C9CA93FCDFAC6BA</span></div><div class="m" style="left:23px;top:504.95px"><span style="color:#a9bb58">8A295BD743CC024FF866A53492B5B576A87065F5260DD8581AA5A430725C4A64E7A0F2B2</span></div><div class="m" style="left:23px;top:521.95px"><span style="color:#a9bb58">C5D1CE60AB5CCA1BB3701B64781E506E7DB51BCB3300C1C5BC6F0A340DA96B34553E1E07</span></div><div class="m" style="left:23px;top:538.95px"><span style="color:#a9bb58">B2228C48D0E5693880099F01771FBD60</span></div><div class="a" style="left:-17px;top:557.60px;width:30px;text-align:right;font-family:'Liberation Mono',monospace;font-size:12px;line-height:17px;color:#9a9a9a;white-space:pre">4</div><div class="m" style="left:23px;top:555.95px"><span style="color:#dde6f2">Sec-Ch-Ua: </span><span style="color:#c9c4be">"Chromium";v="139", "Not;A=Brand";v="99"</span></div><div class="a" style="left:-17px;top:574.60px;width:30px;text-align:right;font-family:'Liberation Mono',monospace;font-size:12px;line-height:17px;color:#9a9a9a;white-space:pre">5</div><div class="m" style="left:23px;top:572.95px"><span style="color:#dde6f2">Sec-Ch-Ua-Mobile: </span><span style="color:#c9c4be">?0</span></div><div class="a" style="left:-17px;top:591.60px;width:30px;text-align:right;font-family:'Liberation Mono',monospace;font-size:12px;line-height:17px;color:#9a9a9a;white-space:pre">6</div><div class="m" style="left:23px;top:589.95px"><span style="color:#dde6f2">Sec-Ch-Ua-Platform: </span><span style="color:#c9c4be">"Linux"</span></div><div class="a" style="left:-17px;top:608.60px;width:30px;text-align:right;font-family:'Liberation Mono',monospace;font-size:12px;line-height:17px;color:#9a9a9a;white-space:pre">7</div><div class="m" style="left:23px;top:606.95px"><span style="color:#dde6f2">Accept-Language: </span><span style="color:#c9c4be">en-US,en;q=0.9</span></div><div class="a" style="left:-17px;top:625.60px;width:30px;text-align:right;font-family:'Liberation Mono',monospace;font-size:12px;line-height:17px;color:#9a9a9a;white-space:pre">8</div><div class="m" style="left:23px;top:623.95px"><span style="color:#dde6f2">Upgrade-Insecure-Requests: </span><span style="color:#c9c4be">1</span></div><div class="a" style="left:-17px;top:642.60px;width:30px;text-align:right;font-family:'Liberation Mono',monospace;font-size:12px;line-height:17px;color:#9a9a9a;white-space:pre">9</div><div class="m" style="left:23px;top:640.95px"><span style="color:#dde6f2">User-Agent: </span><span style="color:#c9c4be">Mozilla/5.0 (X11; Linux x86_64) AppleWebKit/537.36 (KHTML,</span></div><div class="m" style="left:23px;top:657.95px"><span style="color:#c9c4be">like Gecko) Chrome/139.0.0.0 Safari/537.36</span></div><div class="a" style="left:-17px;top:676.60px;width:30px;text-align:right;font-family:'Liberation Mono',monospace;font-size:12px;line-height:17px;color:#9a9a9a;white-space:pre">10</div><div class="m" style="left:23px;top:674.95px"><span style="color:#dde6f2">Accept: </span></div><div class="m" style="left:23px;top:691.95px"><span style="color:#c9c4be">text/html,application/xhtml+xml,application/xml;q=0.9,image/avif,image/w</span></div><div class="m" style="left:23px;top:708.95px"><span style="color:#c9c4be">ebp,image/apng,*/*;q=0.8,application/signed-exchange;v=b3;q=0.7</span></div><div class="a" style="left:-17px;top:727.60px;width:30px;text-align:right;font-family:'Liberation Mono',monospace;font-size:12px;line-height:17px;color:#9a9a9a;white-space:pre">11</div><div class="m" style="left:23px;top:725.95px"><span style="color:#dde6f2">Sec-Fetch-Site: </span><span style="color:#c9c4be">same-origin</span></div><div class="a" style="left:-17px;top:744.60px;width:30px;text-align:right;font-family:'Liberation Mono',monospace;font-size:12px;line-height:17px;color:#9a9a9a;white-space:pre">12</div><div class="m" style="left:23px;top:742.95px"><span style="color:#dde6f2">Sec-Fetch-Mode: </span><span style="color:#c9c4be">navigate</span></div><div class="a" style="left:-17px;top:761.60px;width:30px;text-align:right;font-family:'Liberation Mono',monospace;font-size:12px;line-height:17px;color:#9a9a9a;white-space:pre">13</div><div class="m" style="left:23px;top:759.95px"><span style="color:#dde6f2">Sec-Fetch-User: </span><span style="color:#c9c4be">?1</span></div><div class="a" style="left:-17px;top:778.60px;width:30px;text-align:right;font-family:'Liberation Mono',monospace;font-size:12px;line-height:17px;color:#9a9a9a;white-space:pre">14</div><div class="m" style="left:23px;top:776.95px"><span style="color:#dde6f2">Sec-Fetch-Dest: </span><span style="color:#c9c4be">document</span></div><div class="a" style="left:-17px;top:795.60px;width:30px;text-align:right;font-family:'Liberation Mono',monospace;font-size:12px;line-height:17px;color:#9a9a9a;white-space:pre">15</div><div class="m" style="left:23px;top:793.95px"><span style="color:#dde6f2">Referer: </span><span style="color:#c9c4be">https://hercules.htb/Home/Downloads</span></div><div class="a" style="left:-17px;top:812.60px;width:30px;text-align:right;font-family:'Liberation Mono',monospace;font-size:12px;line-height:17px;color:#9a9a9a;white-space:pre">16</div><div class="m" style="left:23px;top:810.95px"><span style="color:#dde6f2">Accept-Encoding: </span><span style="color:#c9c4be">gzip, deflate, br</span></div><div class="a" style="left:-17px;top:829.60px;width:30px;text-align:right;font-family:'Liberation Mono',monospace;font-size:12px;line-height:17px;color:#9a9a9a;white-space:pre">17</div><div class="m" style="left:23px;top:827.95px"><span style="color:#dde6f2">Priority: </span><span style="color:#c9c4be">u=0, i</span></div><div class="a" style="left:-17px;top:846.60px;width:30px;text-align:right;font-family:'Liberation Mono',monospace;font-size:12px;line-height:17px;color:#9a9a9a;white-space:pre">18</div><div class="a" style="left:-17px;top:863.60px;width:30px;text-align:right;font-family:'Liberation Mono',monospace;font-size:12px;line-height:17px;color:#9a9a9a;white-space:pre">19</div><div class="a" style="left:424px;top:522px;width:1px;height:16px;background:#ffffff;"></div><div class="a" style="left:0px;top:1124px;width:612px;height:1px;background:#4a4a4a;"></div><div class="a" style="left:0px;top:1125px;width:612px;height:8px;background:#252525;"></div><div class="a" style="left:612px;top:312px;width:1px;height:821px;background:#3c3c3c;"></div><div class="a" style="left:613px;top:312px;width:634px;height:821px;background:#252525;"></div><div class="t" style="left:623.00px;top:333.98px;line-height:22px;font-size:14.5px;color:#ffffff;font-family:'Liberation Sans',sans-serif;font-weight:bold;font-style:normal;">Response</div><div class="t" style="left:628.00px;top:360.50px;line-height:20px;font-size:13px;color:#7c7c7c;font-family:'Liberation Sans',sans-serif;font-weight:normal;font-style:normal;">Pretty</div><div class="t" style="left:694.00px;top:360.50px;line-height:20px;font-size:13px;color:#e6e6e6;font-family:'Liberation Sans',sans-serif;font-weight:normal;font-style:normal;">Raw</div><div class="t" style="left:749.00px;top:360.50px;line-height:20px;font-size:13px;color:#cfcfcf;font-family:'Liberation Sans',sans-serif;font-weight:normal;font-style:normal;">Hex</div><div class="t" style="left:801.00px;top:360.50px;line-height:20px;font-size:13px;color:#7c7c7c;font-family:'Liberation Sans',sans-serif;font-weight:normal;font-style:normal;">Render</div><div class="a" style="left:679px;top:380px;width:54px;height:2px;background:#e2713a;"></div><div class="a" style="left:613px;top:382px;width:633px;height:1px;background:#454545;"></div><div class="a" style="left:1164px;top:317px;width:72px;height:18px;border-radius:6px;background:#3a3a3a;overflow:hidden"><div class="a" style="left:0;top:0;width:23px;height:18px;background:#2f5f9e"></div><div class="a" style="left:23px;top:0;width:1px;height:18px;background:#2e2e2e"></div><div class="a" style="left:47px;top:0;width:1px;height:18px;background:#2e2e2e"></div></div><div class="a" style="left:1171px;top:322px;width:4px;height:8px;background:#ffffff;"></div><div class="a" style="left:1176.5px;top:322px;width:4px;height:8px;background:#ffffff;"></div><div class="a" style="left:1195px;top:322px;width:10px;height:3px;background:#c8c8c8;"></div><div class="a" style="left:1195px;top:327px;width:10px;height:3px;background:#c8c8c8;"></div><div class="a" style="left:1219px;top:322px;width:10px;height:8px;background:#c8c8c8;"></div><div class="a" style="left:1162px;top:360px;width:18px;height:17px;border-radius:4px;background:#2f5f9e"></div><svg class="a" style="left:1165px;top:363px;" width="12" height="11" viewBox="0 0 12 11"><g fill="none" stroke="#ffffff" stroke-width="1.3"><path d="M1 1.5h10"/><path d="M1 5.2h8.2a1.9 1.9 0 0 1 0 3.8H6"/><path d="M1 9h2.5"/><path d="M7.4 7.5L5.8 9l1.6 1.5"/></g></svg><div class="t" style="left:1194.00px;top:358.50px;line-height:20px;font-size:13px;color:#c8c8c8;font-family:'Liberation Sans',sans-serif;font-weight:normal;font-style:normal;">\n</div><svg class="a" style="left:1222px;top:363px;" width="10" height="10" viewBox="0 0 10 10"><g stroke="#c8c8c8" stroke-width="1.1"><path d="M0 1.5h10M0 5h10M0 8.6h10"/></g></svg><div class="a" style="left:643px;top:383px;width:1px;height:741px;background:#4a4a4a;"></div><div class="a" style="left:644px;top:387px;width:592px;height:17px;background:#2e2f31;"></div><div class="a" style="left:613px;top:383px;width:633px;height:741px;overflow:hidden"><div class="a" style="left:-4px;top:4.60px;width:30px;text-align:right;font-family:'Liberation Mono',monospace;font-size:12px;line-height:17px;color:#9a9a9a;white-space:pre">1</div><div class="m" style="left:36px;top:2.95px"><span style="color:#dde6f2">HTTP/2 200 OK</span></div><div class="a" style="left:-4px;top:21.60px;width:30px;text-align:right;font-family:'Liberation Mono',monospace;font-size:12px;line-height:17px;color:#9a9a9a;white-space:pre">2</div><div class="m" style="left:36px;top:19.95px"><span style="color:#dde6f2">Cache-Control: </span><span style="color:#c9c4be">private, s-maxage=0</span></div><div class="a" style="left:-4px;top:38.60px;width:30px;text-align:right;font-family:'Liberation Mono',monospace;font-size:12px;line-height:17px;color:#9a9a9a;white-space:pre">3</div><div class="m" style="left:36px;top:36.95px"><span style="color:#dde6f2">Content-Type: </span><span style="color:#c9c4be">application/pdf</span></div><div class="a" style="left:-4px;top:55.60px;width:30px;text-align:right;font-family:'Liberation Mono',monospace;font-size:12px;line-height:17px;color:#9a9a9a;white-space:pre">4</div><div class="m" style="left:36px;top:53.95px"><span style="color:#dde6f2">Server: </span><span style="color:#c9c4be">Microsoft-IIS/10.0</span></div><div class="a" style="left:-4px;top:72.60px;width:30px;text-align:right;font-family:'Liberation Mono',monospace;font-size:12px;line-height:17px;color:#9a9a9a;white-space:pre">5</div><div class="m" style="left:36px;top:70.95px"><span style="color:#dde6f2">Content-Disposition: </span><span style="color:#c9c4be">attachment; filename=registration.pdf</span></div><div class="a" style="left:-4px;top:89.60px;width:30px;text-align:right;font-family:'Liberation Mono',monospace;font-size:12px;line-height:17px;color:#9a9a9a;white-space:pre">6</div><div class="m" style="left:36px;top:87.95px"><span style="color:#dde6f2">Date: </span><span style="color:#c9c4be">Mon, 20 Oct 2025 02:44:32 GMT</span></div><div class="a" style="left:-4px;top:106.60px;width:30px;text-align:right;font-family:'Liberation Mono',monospace;font-size:12px;line-height:17px;color:#9a9a9a;white-space:pre">7</div><div class="m" style="left:36px;top:104.95px"><span style="color:#dde6f2">Content-Length: </span><span style="color:#c9c4be">44136</span></div><div class="a" style="left:-4px;top:123.60px;width:30px;text-align:right;font-family:'Liberation Mono',monospace;font-size:12px;line-height:17px;color:#9a9a9a;white-space:pre">8</div><div class="a" style="left:-4px;top:140.60px;width:30px;text-align:right;font-family:'Liberation Mono',monospace;font-size:12px;line-height:17px;color:#9a9a9a;white-space:pre">9</div><div class="m" style="left:36px;top:138.95px"><span style="color:#c8c8c8">%PDF-1.6</span></div><div class="a" style="left:-4px;top:157.60px;width:30px;text-align:right;font-family:'Liberation Mono',monospace;font-size:12px;line-height:17px;color:#9a9a9a;white-space:pre">10</div><div class="m" style="left:36px;top:155.95px"><span style="color:#c8c8c8">%ÃäÃ¼Ã¶Ã</span></div><div class="a" style="left:-4px;top:174.60px;width:30px;text-align:right;font-family:'Liberation Mono',monospace;font-size:12px;line-height:17px;color:#9a9a9a;white-space:pre">11</div><div class="m" style="left:36px;top:172.95px"><span style="color:#c8c8c8">2 0 obj</span></div><div class="a" style="left:-4px;top:191.60px;width:30px;text-align:right;font-family:'Liberation Mono',monospace;font-size:12px;line-height:17px;color:#9a9a9a;white-space:pre">12</div><div class="m" style="left:36px;top:189.95px"><span style="color:#c8c8c8">&lt;&lt;/Length 3 0 R/Filter/FlateDecode&gt;&gt;</span></div><div class="a" style="left:-4px;top:208.60px;width:30px;text-align:right;font-family:'Liberation Mono',monospace;font-size:12px;line-height:17px;color:#9a9a9a;white-space:pre">13</div><div class="m" style="left:36px;top:206.95px"><span style="color:#c8c8c8">stream</span></div><div class="a" style="left:-4px;top:225.60px;width:30px;text-align:right;font-family:'Liberation Mono',monospace;font-size:12px;line-height:17px;color:#9a9a9a;white-space:pre">14</div><div class="m" style="left:36px;top:223.95px"><span style="color:#c8c8c8">x½YKG¾Ï¯ès`+%Õyô|s²CÈ-qBpñÅ?*©^ÝÓ;½¶!÷N«[%¤j-`ú|øwÒVãäT</span></div><div class="a" style="left:-4px;top:242.60px;width:30px;text-align:right;font-family:'Liberation Mono',monospace;font-size:12px;line-height:17px;color:#9a9a9a;white-space:pre">15</div><div class="m" style="left:36px;top:240.95px"><span style="color:#c8c8c8">O$?ý~øù»éV8Õÿþ8hz§¿ò:òÝÇ©ÞÉRÛ¢ù¼ñçáÃwò¿Å*}âÎ5fâ?deuÆé3ÞÑR¢UÆÀäMRÆYZÒWÑvÊÇ</span></div><div class="m" style="left:36px;top:257.95px"><span style="color:#c8c8c8">é§ÃûxXùEôJkSXy±BÙgT.¹µPvY]J</span></div><div class="a" style="left:-4px;top:276.60px;width:30px;text-align:right;font-family:'Liberation Mono',monospace;font-size:12px;line-height:17px;color:#9a9a9a;white-space:pre">16</div><div class="m" style="left:36px;top:274.95px"><span style="color:#c8c8c8">\X+e5:¬²ÏPÙï÷Ù\TÖå!+¿hrqtL¥&lt;duÑ³½Î&amp;*ÌiðÖ'ÖJÉ¼(ë·[)÷ruÒ¼´ÊàmÐ.Ò_MóóË!i`&amp;O½</span></div><div class="m" style="left:36px;top:291.95px"><span style="color:#c8c8c8">vÓËoÓ÷7Ðùìôòágµ9&gt;ÙgmOø¬F¾ó|Oð¬c¹KÃU&gt;g²èóñÉ&lt;ÓQ_"÷N_¿¾¼;Ì/eKµ:Ë¢ç£Ç`a¹kf-óp</span></div><div class="m" style="left:36px;top:308.95px"><span style="color:#c8c8c8">ËY"{8ÈÌÑðN"ÉÌ?ÉLô/2!±Ê'~ï,Í¯\Dc¾^õÌnü*?&gt;-çK½O(</span></div><div class="m" style="left:36px;top:325.95px"><span style="color:#c8c8c8">emAm£èu9Ò"s¾Ü¶\"[md{RÀ¨ aK¥ÝUÈ AäÍk;ZùÉ¶Êý8</span></div><div class="a" style="left:-4px;top:344.60px;width:30px;text-align:right;font-family:'Liberation Mono',monospace;font-size:12px;line-height:17px;color:#9a9a9a;white-space:pre">17</div><div class="m" style="left:36px;top:342.95px"><span style="color:#c8c8c8">\LfKÜ)ï"o</span></div><div class="a" style="left:-4px;top:361.60px;width:30px;text-align:right;font-family:'Liberation Mono',monospace;font-size:12px;line-height:17px;color:#9a9a9a;white-space:pre">18</div><div class="m" style="left:36px;top:359.95px"><span style="color:#c8c8c8">rÈó%ñ¸c]NpÎzñSùi³¶ÄóXÊ`KÚ-M¾h^OÔ1Õ¶"uÛrÚ¿*L·ÊªâNÙà¥î×¾Ëð&amp;ÿ:ó:¾fpPÍKMænìTâ</span></div><div class="m" style="left:36px;top:376.95px"><span style="color:#c8c8c8">ÙøM/ViòßRÑeæ2pÊ.\ÛT#ÎWÊ&gt;k ¨~d-}V</span></div><div class="a" style="left:-4px;top:395.60px;width:30px;text-align:right;font-family:'Liberation Mono',monospace;font-size:12px;line-height:17px;color:#9a9a9a;white-space:pre">19</div><div class="m" style="left:36px;top:393.95px"><span style="color:#c8c8c8">RYe·HXTiØk¥ìlB±^$2§3¶ÚJ± C°6*mñ¶ÐÄVÊÜ³^ùMDRè¼B+O/`8S%«Oß</span></div><div class="a" style="left:-4px;top:412.60px;width:30px;text-align:right;font-family:'Liberation Mono',monospace;font-size:12px;line-height:17px;color:#9a9a9a;white-space:pre">20</div><div class="m" style="left:36px;top:410.95px"><span style="color:#c8c8c8">ìNSiØIiBfÉcÃgÃAhùÝü`û2ü4cSNh¨àj.W2¡ø"¾Fê&amp;eäqÛêMH@õ½ÊüÅvg~.ù ÜQ</span></div><div class="m" style="left:36px;top:427.95px"><span style="color:#c8c8c8">PÜÿ¤Ö#95líö:DZqYPU)+Èh&amp;»nnax-ç$æ {</span></div><div class="a" style="left:-4px;top:446.60px;width:30px;text-align:right;font-family:'Liberation Mono',monospace;font-size:12px;line-height:17px;color:#9a9a9a;white-space:pre">21</div><div class="m" style="left:36px;top:444.95px"><span style="color:#c8c8c8">ÙDqµ °kóUµbyðÍöÉ÷Õt^îjâ¼òÎW¤Õâý$8I¯#á&gt;vS[t2`ÕI^ÊGù6g</span></div><div class="m" style="left:36px;top:461.95px"><span style="color:#c8c8c8">/3$AuÉ+ò=?".§»&lt;(\UNÈëßMq¶²Ûjä· =µfÇ)]Jöo</span></div><div class="m" style="left:36px;top:478.95px"><span style="color:#c8c8c8">²±)â,&lt;·ckiÎ£kÁÔ72Í-÷q-72÷õN=_wkåW@«6±)öØÂ´µ%Ë×È"ýà÷³ÜKc!ªHf±KÛ:»EU-DÂ±ÛZD</span></div><div class="m" style="left:36px;top:495.95px"><span style="color:#c8c8c8">q¾Uýô^ohB ®i³7ÔµíCsçx3þBÁ&lt;®{ Ø³&lt;+$b#¡ílPäñ[AÀ«l-"KàxµòÁL³LÍl[ÓÃuÉB)mÌ</span></div><div class="m" style="left:36px;top:512.95px"><span style="color:#c8c8c8">Éd4²!Ï3éq+5¥ ê=6©ÙJå¡þ`fM¼-³5õàá©Ï&gt;où4dÛ&lt;×TíRÐÎ-Á¬ãYÖë`ÐRk</span></div><div class="m" style="left:36px;top:529.95px"><span style="color:#c8c8c8">Cl4YVÆ´õR!íøvZ=\-¡ÖÕ´OÛú´BhÛ±«VÀÿj£Æ-ÿÎkpøêÒárH¬×AGß×'Íê¥8:ïº^´FÄÓH\wh\*`</span></div><div class="m" style="left:36px;top:546.95px"><span style="color:#c8c8c8">t§ÞÅSµ¯é¡ÀåèÒÂ~®Ñ¶×önê±`±ïm$£a VÄJüÔàXÍëbÇUv-«M½¹câ-c%Zê</span></div><div class="a" style="left:-4px;top:565.60px;width:30px;text-align:right;font-family:'Liberation Mono',monospace;font-size:12px;line-height:17px;color:#9a9a9a;white-space:pre">22</div><div class="m" style="left:36px;top:563.95px"><span style="color:#c8c8c8">ý8VVÊîUrãXY)û¬à_±VÊ&gt;«F"Ç3ÖJÙ+!FÜ8VVÊîXâa+3§3¬QYAgÖJ;4&lt;I®x+e· ]åJ¹ÓùlíÓ!ÆJ</span></div><div class="m" style="left:36px;top:580.95px"><span style="color:#c8c8c8">àgè°C«%qúÍi,6µõÒO¯cë»l</span></div><div class="a" style="left:-4px;top:599.60px;width:30px;text-align:right;font-family:'Liberation Mono',monospace;font-size:12px;line-height:17px;color:#9a9a9a;white-space:pre">23</div><div class="m" style="left:36px;top:597.95px"><span style="color:#c8c8c8">nUNgîõ²&gt;÷ß(¸wJ½mKeF{Ç\å®Õ²¨¾"Ï¼µ%À½C?4ZéøúÔØZàú r</span></div><div class="a" style="left:-4px;top:616.60px;width:30px;text-align:right;font-family:'Liberation Mono',monospace;font-size:12px;line-height:17px;color:#9a9a9a;white-space:pre">24</div><div class="m" style="left:36px;top:614.95px"><span style="color:#c8c8c8">&lt;U¼lÇTEwÎ&gt;ºÇ=:ÓçÞÐf½c.-ñAX;|uá´.]O«¯.²&amp;¯.¼X¡ìIV/"`BßrFY¨Z8-ÇµìoRe-vp´</span></div><div class="m" style="left:36px;top:631.95px"><span style="color:#c8c8c8">qÇÑx=â]S?ô.8¯æ Ò~#:%K[èÀÙÃ:p3DÌ=A©ÚçÖ_2JÛ×¦f:Æ|Õ÷</span></div><div class="m" style="left:36px;top:648.95px"><span style="color:#c8c8c8">ÚNQDõ-oJ&gt;9LtlÝ|ðäMðf£ëT"F</span></div><div class="a" style="left:-4px;top:667.60px;width:30px;text-align:right;font-family:'Liberation Mono',monospace;font-size:12px;line-height:17px;color:#9a9a9a;white-space:pre">25</div><div class="m" style="left:36px;top:665.95px"><span style="color:#c8c8c8">!Ë¤ÛM÷ø×±Ý£¤QfüßzBtkMKÅ7NÉ¶Û¿X8Q-§Ì¡uW'BNF</span></div><div class="a" style="left:-4px;top:684.60px;width:30px;text-align:right;font-family:'Liberation Mono',monospace;font-size:12px;line-height:17px;color:#9a9a9a;white-space:pre">26</div><div class="m" style="left:36px;top:682.95px"><span style="color:#c8c8c8">H.ú«ã¼²øPæ}ï§ÿ×t</span></div><div class="a" style="left:-4px;top:701.60px;width:30px;text-align:right;font-family:'Liberation Mono',monospace;font-size:12px;line-height:17px;color:#9a9a9a;white-space:pre">27</div><div class="m" style="left:36px;top:699.95px"><span style="color:#c8c8c8">endstream</span></div><div class="a" style="left:-4px;top:718.60px;width:30px;text-align:right;font-family:'Liberation Mono',monospace;font-size:12px;line-height:17px;color:#9a9a9a;white-space:pre">28</div><div class="m" style="left:36px;top:716.95px"><span style="color:#c8c8c8">endobj</span></div><div class="a" style="left:-4px;top:735.60px;width:30px;text-align:right;font-family:'Liberation Mono',monospace;font-size:12px;line-height:17px;color:#9a9a9a;white-space:pre">29</div></div><div class="a" style="left:1238px;top:386px;width:6px;height:36px;border-radius:3px;background:#454545"></div><div class="a" style="left:613px;top:1124px;width:633px;height:1px;background:#4a4a4a;"></div><div class="a" style="left:613px;top:1125px;width:633px;height:8px;background:#252525;"></div><div class="a" style="left:1246px;top:312px;width:1px;height:821px;background:#3c3c3c;"></div><div class="a" style="left:1247px;top:312px;width:34px;height:821px;background:#2b2c2e;"></div><div class="a" style="left:1247px;top:448px;width:34px;height:1px;background:#3e3e3e;"></div><div class="a" style="left:1247px;top:561px;width:34px;height:1px;background:#3e3e3e;"></div><svg class="a" style="left:1256px;top:329px;" width="16" height="12" viewBox="0 0 16 12"><g fill="none" stroke="#c8c8c8" stroke-width="1.2"><path d="M0.5 5h15"/><path d="M3.5 5l1-3.8h7l1 3.8"/><circle cx="4.8" cy="9" r="2.1"/><circle cx="11.2" cy="9" r="2.1"/><path d="M6.9 9h2.2"/></g></svg><div class="a" style="left:1257px;top:359px;width:14px;height:64px"><div style="position:absolute;left:14px;top:0;transform-origin:0 0;transform:rotate(90deg);white-space:pre;font-size:15.5px;line-height:14px;color:#c8c8c8">Inspector</div></div><svg class="a" style="left:1257px;top:465px;" width="14" height="16" viewBox="0 0 14 16"><g fill="none" stroke="#c8c8c8" stroke-width="1.2"><path d="M1.5 1h7l4 4v10h-11z"/><path d="M8.5 1v4h4"/><path d="M4 8.5h6M4 11h6M4 6h3"/></g></svg><div class="a" style="left:1257px;top:496px;width:14px;height:40px"><div style="position:absolute;left:14px;top:0;transform-origin:0 0;transform:rotate(90deg);white-space:pre;font-size:15.5px;line-height:14px;color:#c8c8c8">Notes</div></div><div class="a" style="left:1282px;top:0px;width:5px;height:1133px;background:#16171b;"></div><div class="a" style="left:1287px;top:0px;width:1267px;height:1133px;background:#5c5c5c;"></div><div class="a" style="left:2549px;top:0px;width:5px;height:1133px;background:#16171b;"></div><div class="a" style="left:1287px;top:108px;width:10px;height:1025px;background:linear-gradient(to right,#525252,#5c5c5c)"></div><div class="a" style="left:1287px;top:0px;width:1262px;height:37px;background:#1f2028;"></div><div class="a" style="left:1407px;top:-1px;width:913px;height:32px;border-radius:16px;background:#252832"></div><svg class="a" style="left:1302px;top:7px;" width="14" height="14" viewBox="0 0 14 14"><g fill="none" stroke="#e3e3e3" stroke-width="1.6"><path d="M13.5 7H1.5M7 1.3L1.3 7 7 12.7"/></g></svg><svg class="a" style="left:1338px;top:7px;" width="14" height="14" viewBox="0 0 14 14"><g fill="none" stroke="#7d7e83" stroke-width="1.6"><path d="M0.5 7h12M7 1.3L12.7 7 7 12.7"/></g></svg><svg class="a" style="left:1374px;top:7px;" width="14" height="14" viewBox="0 0 14 14"><g fill="none" stroke="#e3e3e3" stroke-width="1.6"><path d="M12.2 7.3A5.3 5.3 0 1 1 10.6 3.1"/><path d="M12.4 0.8v3.8H8.6" stroke-linejoin="miter"/></g></svg><div class="a" style="left:1416px;top:6px;width:16px;height:16px;border:1.6px solid #e8804f;border-radius:3px"></div><svg class="a" style="left:1419px;top:9px;" width="10" height="10" viewBox="0 0 10 10"><path d="M5.6 1L2.8 5.2h3.6L3.8 9" fill="none" stroke="#e8804f" stroke-width="1.3"/></svg><div class="t" style="left:1444px;top:5px;line-height:20px;font-size:14.5px;color:#9aa0a6"><span style="color:#e8804f;text-decoration:line-through">https</span>://<span style="color:#e8eaed">hercules.htb</span>/Home/Downloads</div><svg class="a" style="left:2289px;top:6px;" width="16" height="16" viewBox="0 0 16 16"><path d="M8 1.3l2 4.3 4.6.5-3.4 3.1 1 4.6L8 11.5l-4.2 2.3 1-4.6L1.4 6.1 6 5.6z" fill="none" stroke="#c4c7c5" stroke-width="1.4" stroke-linejoin="round"/></svg><svg class="a" style="left:2338px;top:5px;" width="18" height="17" viewBox="0 0 18 17"><path d="M2 6.5V3.5h4V2.2a1.8 1.8 0 0 1 3.6 0V3.5h4v4h1.3a1.8 1.8 0 0 1 0 3.6H13.6v4.4H9.6v-1.2a1.8 1.8 0 0 0-3.6 0v1.2H2V12" fill="none" stroke="#c4c7c5" stroke-width="1.5"/></svg><div class="a" style="left:2373px;top:7px;width:1.5px;height:14px;background:#0e0f12;"></div><svg class="a" style="left:2392px;top:5px;" width="18" height="17" viewBox="0 0 18 17"><g fill="none" stroke="#c4c7c5" stroke-width="1.5"><path d="M8 15H1.5V2.5h14V7"/><circle cx="12" cy="11" r="2.6"/><path d="M14 13l2.5 2.5"/></g><rect x="1.5" y="2" width="14" height="3" fill="#c4c7c5"/></svg><div class="a" style="left:2428px;top:7px;width:1.5px;height:14px;background:#0e0f12;"></div><div class="a" style="left:2439px;top:-2px;width:33px;height:33px;border-radius:50%;background:#393a40"></div><svg class="a" style="left:2447px;top:5px;" width="17" height="18" viewBox="0 0 17 18"><g fill="none" stroke="#a8c7fa" stroke-width="1.8"><path d="M8.5 1v9.5M4.5 6.8l4 4 4-4"/><path d="M1.5 10v4h14v-4"/><path d="M2.5 17.2h12"/></g></svg><svg class="a" style="left:2482px;top:5px;" width="18" height="18" viewBox="0 0 18 18"><g fill="none" stroke="#a8c7fa" stroke-width="1.5"><circle cx="9" cy="9" r="8"/><circle cx="9" cy="7" r="2.4"/><path d="M3.8 14.6c1.4-1.6 3.2-2.2 5.2-2.2s3.8.6 5.2 2.2"/></g></svg><div class="a" style="left:2525.5px;top:6.0px;width:3px;height:3px;border-radius:50%;background:#e3e3e3"></div><div class="a" style="left:2525.5px;top:12.5px;width:3px;height:3px;border-radius:50%;background:#e3e3e3"></div><div class="a" style="left:2525.5px;top:19.0px;width:3px;height:3px;border-radius:50%;background:#e3e3e3"></div><div class="a" style="left:1287px;top:37px;width:1262px;height:71px;background:#111015;"></div><div class="t" style="left:1302.50px;top:56.78px;line-height:33px;font-size:22px;color:#dcdcdc;font-family:'Liberation Serif',serif;font-weight:bold;font-style:italic;">Hercules Portal</div><div class="a" style="left:2488px;top:50px;width:46px;height:46px;border-radius:50%;background:#1e1d22"></div><svg class="a" style="left:2492px;top:59px;" width="39" height="29" viewBox="0 0 39 29"><defs><clipPath id="envc"><rect x="0" y="0" width="38.5" height="28.2" rx="2.5"/></clipPath></defs><g clip-path="url(#envc)"><rect x="0" y="0" width="38.5" height="28.2" fill="#f3f3f3"/><path d="M-1 3.6L19.25 17.2 39.5 3.6" fill="none" stroke="#1c1c21" stroke-width="3.4"/></g></svg><div class="a" style="left:1302px;top:134px;width:113px;height:29px;background:#2b2b2b;"></div><div class="t" style="left:1302px;top:134px;line-height:29px;font-size:24.7px;font-family:'Liberation Serif',serif;color:#ffffff">Downloads</div><div class="a" style="left:1302px;top:195px;width:352px;height:433px;border-radius:30px;background:#252525;overflow:hidden;box-shadow:0 0 14px rgba(0,0,0,.12)"><div class="a" style="left:0;top:215px;width:352px;height:55px;background:#2e2e2e"></div></div><div class="a" style="left:1326px;top:225px;width:75px;height:75px;border-radius:50%;background:#8fb1da;overflow:hidden"><svg class="a" style="left:0;top:0" width="75" height="75" viewBox="0 0 75 75"><path d="M12.5 65 C12 53 13 45 18 41.5 C22 39 26 38 30 37.5 C33 40.5 35.5 41.5 37.5 41.5 C39.5 41.5 42 40.5 45 37.5 C49 38 53 39 57 41.5 C62 45 63 53 62.5 65 C50 68.5 25 68.5 12.5 65 Z" fill="#ffffff"/><ellipse cx="37.5" cy="23.2" rx="15.2" ry="18.6" fill="#8fb1da"/><ellipse cx="37.5" cy="23.2" rx="13.8" ry="17.2" fill="#ffffff"/></svg></div><div class="t" style="left:1417.00px;top:239.54px;line-height:22px;font-size:15px;color:#e6e6e6;font-family:'Liberation Serif',serif;font-weight:normal;font-style:normal;">ken.w</div><div class="t" style="left:1417.00px;top:263.30px;line-height:20px;font-size:13px;color:#9d9df5;font-family:'Liberation Sans',sans-serif;font-weight:bold;font-style:normal;">ken.w</div><div class="t" style="left:1326.00px;top:316.80px;line-height:22px;font-size:15px;color:#e8e8e8;font-family:'Liberation Sans',sans-serif;font-weight:normal;font-style:normal;">Dashboard</div><div class="t" style="left:1326.00px;top:371.80px;line-height:22px;font-size:15px;color:#e8e8e8;font-family:'Liberation Sans',sans-serif;font-weight:normal;font-style:normal;">Mail</div><div class="t" style="left:1326.00px;top:426.80px;line-height:22px;font-size:15px;color:#e0675e;font-family:'Liberation Sans',sans-serif;font-weight:normal;font-style:normal;">Downloads</div><div class="t" style="left:1326.00px;top:481.80px;line-height:22px;font-size:15px;color:#e8e8e8;font-family:'Liberation Sans',sans-serif;font-weight:normal;font-style:normal;">Security</div><div class="t" style="left:1326.00px;top:536.80px;line-height:22px;font-size:15px;color:#e8e8e8;font-family:'Liberation Sans',sans-serif;font-weight:normal;font-style:normal;">Account Details</div><div class="t" style="left:1326.00px;top:590.80px;line-height:22px;font-size:15px;color:#e8e8e8;font-family:'Liberation Sans',sans-serif;font-weight:normal;font-style:normal;">Forms</div><div class="a" style="left:1828px;top:246px;width:600px;height:245px;border-radius:12px;background:#1c1c1c;box-shadow:0 2px 6px rgba(0,0,0,.25)"></div><div class="t" style="left:1848.5px;top:263.9px;line-height:24px;font-size:19.5px;font-family:'Liberation Serif',serif;color:#ffffff;transform-origin:0 50%;transform:scaleX(0.93)">Form 1: Registration</div><div class="t" style="left:1848.50px;top:293.65px;line-height:21px;font-size:14px;color:#bdb5c9;font-family:'Liberation Sans',sans-serif;font-weight:normal;font-style:normal;">This form is used for user registration.</div><div class="t" style="left:2317.00px;top:279.80px;line-height:22px;font-size:15px;color:#e0675e;font-family:'Liberation Sans',sans-serif;font-weight:normal;font-style:normal;">Download</div><div class="a" style="left:1848px;top:324px;width:560px;height:1px;background:#5241b5;"></div><div class="t" style="left:1848.5px;top:342.9px;line-height:24px;font-size:19.5px;font-family:'Liberation Serif',serif;color:#ffffff;transform-origin:0 50%;transform:scaleX(0.93)">Form 2: Applications</div><div class="t" style="left:1848.50px;top:372.65px;line-height:21px;font-size:14px;color:#bdb5c9;font-family:'Liberation Sans',sans-serif;font-weight:normal;font-style:normal;">This form is used for managing applications.</div><div class="t" style="left:2317.00px;top:358.80px;line-height:22px;font-size:15px;color:#e0675e;font-family:'Liberation Sans',sans-serif;font-weight:normal;font-style:normal;">Download</div><div class="a" style="left:1848px;top:403px;width:560px;height:1px;background:#5241b5;"></div><div class="t" style="left:1848.5px;top:421.9px;line-height:24px;font-size:19.5px;font-family:'Liberation Serif',serif;color:#ffffff;transform-origin:0 50%;transform:scaleX(0.93)">Form 3: Feedback</div><div class="t" style="left:1848.50px;top:451.65px;line-height:21px;font-size:14px;color:#bdb5c9;font-family:'Liberation Sans',sans-serif;font-weight:normal;font-style:normal;">This form is used for problem reports.</div><div class="t" style="left:2317.00px;top:437.80px;line-height:22px;font-size:15px;color:#e0675e;font-family:'Liberation Sans',sans-serif;font-weight:normal;font-style:normal;">Download</div><div class="a" style="left:2135px;top:31px;width:338px;height:143px;border-radius:12px;background:#1f2028;box-shadow:0 2px 8px rgba(0,0,0,.5),inset 0 0 0 1px #34353a;overflow:hidden"><div class="a" style="left:0;top:9px;width:338px;height:55px;background:#303136"></div><div class="a" style="left:0;top:67px;width:338px;height:1px;background:#474747"></div></div><svg class="a" style="left:2162.5px;top:54px;" width="13" height="16.5" viewBox="0 0 13 16.5"><path d="M0 0h9.3l3.7 3.7v12.8H0z" fill="#c4352b"/><path d="M9.3 0v3.7h3.7z" fill="#d9706a"/><g fill="none" stroke="#ffffff" stroke-width="0.9" stroke-linecap="round"><path d="M5.5 5.2c.6 2 .5 3.6-.6 5.2-1 1.4-1.9 2.5-2.6 3.3"/><path d="M4.9 10.4c1.7-.2 3.7.3 5.6 1.1"/></g></svg><div class="t" style="left:2195.00px;top:46.28px;line-height:25px;font-size:16.5px;color:#e3e3e3;font-family:'Liberation Sans',sans-serif;font-weight:normal;font-style:normal;">registration.pdf</div><div class="t" style="left:2195.00px;top:67.43px;line-height:20px;font-size:13.2px;color:#9a9a9a;font-family:'Liberation Sans',sans-serif;font-weight:normal;font-style:normal;">43.1 KB • Done</div><svg class="a" style="left:2394px;top:55px;" width="18" height="13" viewBox="0 0 18 13"><path d="M1 1.2h5.5l1.8 2H17v9H1z" fill="none" stroke="#c4c7c5" stroke-width="1.5" stroke-linejoin="round"/></svg><svg class="a" style="left:2432px;top:55px;" width="14" height="14" viewBox="0 0 14 14"><g fill="none" stroke="#c4c7c5" stroke-width="1.5"><path d="M6 1H1v12h12V8"/><path d="M8 1h5v5M13 1L6.5 7.5"/></g></svg><div class="a" style="left:2159px;top:115px;width:16px;height:16px;border:2px solid #a2a4a6;border-radius:2px"></div><div class="t" style="left:2191.00px;top:110.89px;line-height:24px;font-size:16.2px;color:#e3e3e3;font-family:'Liberation Sans',sans-serif;font-weight:normal;font-style:normal;">Don't show when downloads finish</div><div class="t" style="left:2191px;top:134.50px;line-height:22px;font-size:15px;color:#9aa0a6">You can change this anytime in <span style="color:#8ab4f8;text-decoration:underline">settings</span></div></body></html>
